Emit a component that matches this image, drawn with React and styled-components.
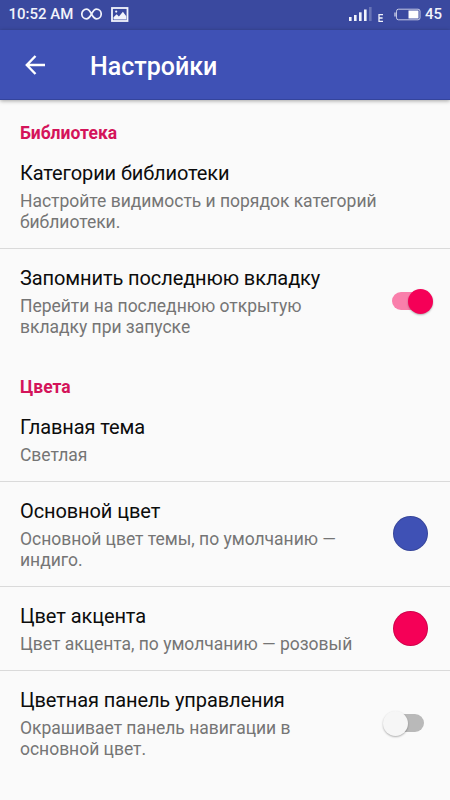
import React from 'react';
import styled, { createGlobalStyle } from 'styled-components';

const GlobalStyle = createGlobalStyle`
  body {
    margin: 0;
    background: #fafafa;
    font-family: Roboto, "Noto Sans", sans-serif;
  }
`;

const Screen = styled.div`
  width: 450px;
  height: 800px;
  overflow: hidden;
  background: #fafafa;
`;

const StatusBar = styled.div`
  display: flex;
  align-items: center;
  justify-content: space-between;
  height: 30px;
  box-sizing: border-box;
  padding: 0 8px 2px 8.5px;
  background: #3a499f;
  color: #f1f3fb;
`;

const StatusGroup = styled.div`
  display: flex;
  align-items: center;
`;

const StatusText = styled.span`
  font-size: 15px;
  font-weight: 500;
  line-height: 18px;
`;

const StatusSvg = styled.svg`
  display: block;
  margin-left: ${({ $gap }) => $gap || '0'};
`;

const BatterySvg = styled(StatusSvg)`
  margin-right: 4px;
`;

const Toolbar = styled.header`
  display: flex;
  align-items: center;
  position: relative;
  height: 70px;
  box-sizing: border-box;
  padding: 0 20px 0 25px;
  background: #3f51b5;
  color: #fff;
  border-bottom: 1px solid #34449c;
  box-shadow: 0 1px 4px rgba(0, 0, 0, 0.35);
`;

const BackButton = styled.button`
  display: flex;
  width: 65px;
  padding: 0;
  border: 0;
  background: none;
  color: inherit;
`;

const ToolbarTitle = styled.h1`
  margin: 0;
  padding-top: 4px;
  font-size: 25px;
  font-weight: 500;
  line-height: 30px;
`;

const SectionTitle = styled.h2`
  height: 44px;
  box-sizing: border-box;
  margin: 0;
  padding: 23px 20px 0;
  color: #d4145a;
  font-size: 17.5px;
  font-weight: 700;
  line-height: 20px;
`;

const Row = styled.div`
  display: flex;
  align-items: center;
  justify-content: space-between;
  height: ${({ $height }) => $height}px;
  box-sizing: border-box;
  padding: 0 22px 0 20px;
  border-bottom: 1px solid ${({ $divider }) => ($divider ? '#dadada' : 'transparent')};
`;

const RowText = styled.div`
  align-self: flex-start;
  padding-top: 17px;
  white-space: pre-line;
`;

const RowTitle = styled.div`
  margin-bottom: 6px;
  color: #0c0c0c;
  font-size: 20px;
  line-height: 24px;
  letter-spacing: -0.1px;
`;

const RowSummary = styled.div`
  color: #757575;
  font-size: 17.5px;
  line-height: 20.5px;
  letter-spacing: -0.02px;
`;

const Swatch = styled.span`
  flex: none;
  width: 35px;
  height: 35px;
  box-sizing: border-box;
  margin: 0 0.5px 1px 0;
  border: 1px solid rgba(0, 0, 0, 0.15);
  border-radius: 50%;
  background: ${({ $color }) => $color};
`;

const Track = styled.span`
  display: flex;
  flex: none;
  align-items: center;
  justify-content: ${({ $on }) => ($on ? 'flex-end' : 'flex-start')};
  width: 36px;
  height: 18px;
  margin-right: ${({ $on }) => ($on ? '0' : '4px')};
  border-radius: 9px;
  background: ${({ $on }) => ($on ? '#f97fab' : '#b9b9b9')};
`;

const Thumb = styled.span`
  flex: none;
  width: 25px;
  height: 25px;
  margin: 0 ${({ $on }) => ($on ? '-5px 0 0' : '0 0 -5px')};
  border-radius: 50%;
  background: ${({ $on }) => ($on ? '#f50057' : '#f6f6f6')};
  box-shadow: 0 1px 2px rgba(0, 0, 0, 0.3);
`;

const Switch = ({ on }) => (
  <Track $on={on} role="switch" aria-checked={on}>
    <Thumb $on={on} />
  </Track>
);

const Preference = ({ title, summary, height, divider, children }) => (
  <Row $height={height} $divider={divider}>
    <RowText>
      <RowTitle>{title}</RowTitle>
      <RowSummary>{summary}</RowSummary>
    </RowText>
    {children}
  </Row>
);

const App = () => (
  <Screen>
    <GlobalStyle />
    <StatusBar>
      <StatusGroup>
        <StatusText>10:52 AM</StatusText>
        <StatusSvg $gap="8px" width="21" height="12" viewBox="0 0 21 12" fill="none" stroke="currentColor" strokeWidth="1.7">
          <path d="M10.5 6C9 3.2 7.8 1.2 5.5 1.2a4.7 4.8 0 0 0 0 9.6c2.3 0 3.5-2 5-4.8s2.7-4.8 5-4.8a4.7 4.8 0 0 1 0 9.6c-2.3 0-3.5-2-5-4.8z" />
        </StatusSvg>
        <StatusSvg $gap="9px" width="18" height="15" viewBox="0 0 18 15">
          <rect x="1" y="1" width="15.5" height="13" fill="none" stroke="currentColor" strokeWidth="1.8" />
          <path d="M2.5 12.5v-2.2l3.2-3 2.2 2.2 4-4.7 3.4 4.4v3.3z" fill="currentColor" />
          <circle cx="5.2" cy="4.6" r="1.1" fill="currentColor" />
        </StatusSvg>
      </StatusGroup>
      <StatusGroup>
        <StatusSvg width="24" height="16" viewBox="0 0 24 16" fill="currentColor">
          <rect x="0" y="11" width="2.6" height="4" />
          <rect x="5" y="9" width="2.6" height="6" />
          <rect x="10" y="6.3" width="2.6" height="8.7" />
          <rect x="15" y="3.5" width="2.6" height="11.5" />
          <rect x="20" y="1" width="2.6" height="14" opacity="0.25" />
        </StatusSvg>
        <StatusSvg $gap="5px" width="6" height="16" viewBox="0 0 6 16" fill="none" stroke="currentColor" strokeWidth="1.3">
          <path d="M5 8.7H1v6.6h4M1 12h3.6" />
        </StatusSvg>
        <BatterySvg $gap="10px" width="27" height="13" viewBox="0 0 27 13">
          <rect x="2.5" y="1.2" width="23.5" height="10.6" rx="2" fill="none" stroke="currentColor" strokeOpacity="0.75" />
          <path d="M1 4.5v4" stroke="currentColor" strokeWidth="1.3" opacity="0.8" />
          <rect x="14.5" y="2.5" width="10" height="8" fill="#fff" />
        </BatterySvg>
        <StatusText>45</StatusText>
      </StatusGroup>
    </StatusBar>
    <Toolbar>
      <BackButton aria-label="Назад">
        <svg width="21" height="20" viewBox="0 0 21 20" fill="none" stroke="currentColor" strokeWidth="2.4">
          <path d="M10.5 1 1.8 10l8.7 9M2 10h18" />
        </svg>
      </BackButton>
      <ToolbarTitle>Настройки</ToolbarTitle>
    </Toolbar>
    <SectionTitle>Библиотека</SectionTitle>
    <Preference
      title="Категории библиотеки"
      summary={'Настройте видимость и порядок категорий\nбиблиотеки.'}
      height={105}
      divider
    />
    <Preference
      title="Запомнить последнюю вкладку"
      summary={'Перейти на последнюю открытую\nвкладку при запуске'}
      height={105}
    >
      <Switch on />
    </Preference>
    <SectionTitle>Цвета</SectionTitle>
    <Preference title="Главная тема" summary="Светлая" height={84} divider />
    <Preference
      title="Основной цвет"
      summary={'Основной цвет темы, по умолчанию —\nиндиго.'}
      height={105}
      divider
    >
      <Swatch $color="#3f51b5" />
    </Preference>
    <Preference
      title="Цвет акцента"
      summary="Цвет акцента, по умолчанию — розовый"
      height={84}
      divider
    >
      <Swatch $color="#f50057" />
    </Preference>
    <Preference
      title="Цветная панель управления"
      summary={'Окрашивает панель навигации в\nосновной цвет.'}
      height={105}
    >
      <Switch on={false} />
    </Preference>
  </Screen>
);

export default App;
